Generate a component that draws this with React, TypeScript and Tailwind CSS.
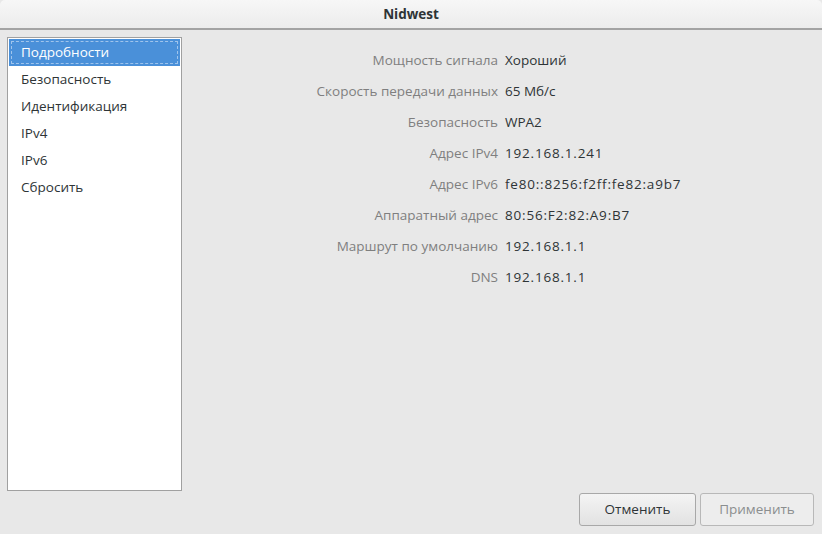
const rows: [string, string, boolean][] = [
  ['Мощность сигнала', 'Хороший', false],
  ['Скорость передачи данных', '65 Мб/с', false],
  ['Безопасность', 'WPA2', false],
  ['Адрес IPv4', '192.168.1.241', true],
  ['Адрес IPv6', 'fe80::8256:f2ff:fe82:a9b7', true],
  ['Аппаратный адрес', '80:56:F2:82:A9:B7', true],
  ['Маршрут по умолчанию', '192.168.1.1', true],
  ['DNS', '192.168.1.1', true],
];

const pages = ['Подробности', 'Безопасность', 'Идентификация', 'IPv4', 'IPv6', 'Сбросить'];

export default function App() {
  return (
    <div
      className="w-[822px] h-[534px] flex flex-col bg-[#e8e8e8] text-[13.5px] text-[#2e3436] overflow-hidden"
      style={{ fontFamily: '"Open Sans", "DejaVu Sans", sans-serif' }}
    >
      <div className="h-[30px] shrink-0 flex items-center justify-center rounded-t-[5px] bg-gradient-to-b from-[#f7f7f7] to-[#ececec] border-b-2 border-[#a3a3a3]">
        <span className="font-bold text-[#2e3436]">Nidwest</span>
      </div>

      <div className="flex-1 flex pl-[7px] pt-[7px]">
        <div className="w-[175px] h-[454px] shrink-0 bg-white border border-[#a0a0a0] p-px">
          {pages.map((p, i) =>
            i === 0 ? (
              <div key={p} className="h-[27px] bg-[#4a90d9] text-white flex items-center">
                <div className="m-[2px] flex-1 h-[23px] border border-dashed border-[#9fc4ec] flex items-center pl-[9px]">
                  {p}
                </div>
              </div>
            ) : (
              <div key={p} className="h-[27px] flex items-center pl-[12px]">
                {p}
              </div>
            )
          )}
        </div>

        <div className="flex-1 flex flex-col">
          <div className="grid grid-cols-[316px_1fr] gap-x-[7px] gap-y-[10px] pt-[13px] leading-[21px]">
            {rows.map(([k, v, num]) => (
              <div key={k} className="contents">
                <div className="text-right text-[#7f7f7f] h-[21px]">{k}</div>
                <div className={num ? 'h-[21px] tracking-[0.8px]' : 'h-[21px]'}>{v}</div>
              </div>
            ))}
          </div>
          <div className="mt-auto flex justify-end gap-[4px] pr-[8px] pb-[8px]">
            <button className="w-[117px] h-[33px] rounded-[3px] border border-[#a8a8a8] bg-gradient-to-b from-[#f4f4f4] to-[#e2e2e2] text-[#2e3436]">
              Отменить
            </button>
            <button className="w-[114px] h-[33px] rounded-[3px] border border-[#b8b8b8] bg-[#ededed] text-[#8b8e8f]">
              Применить
            </button>
          </div>
        </div>
      </div>
    </div>
  );
}
